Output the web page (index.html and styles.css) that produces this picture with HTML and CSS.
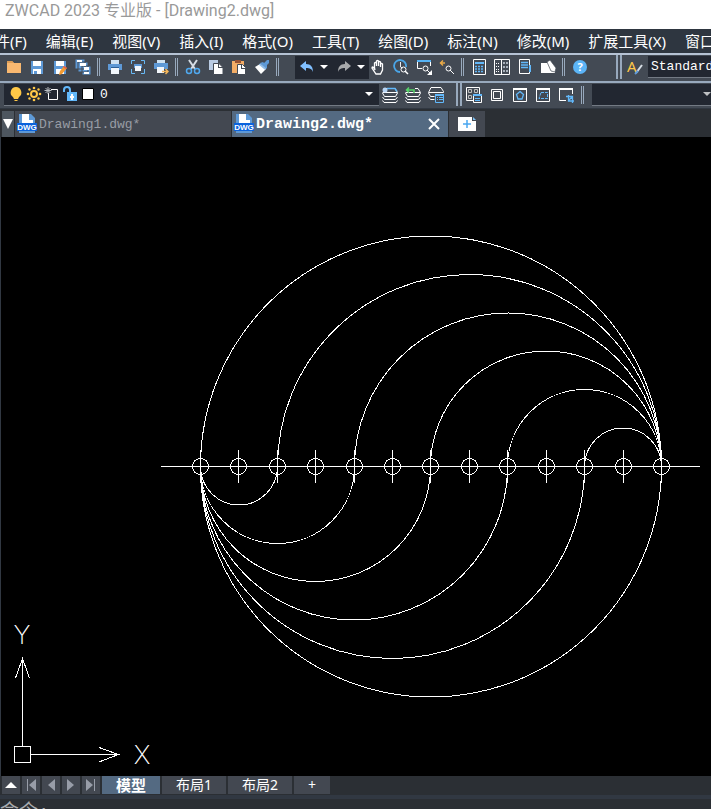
FILE: index.html
```
<!DOCTYPE html>
<html lang="zh-CN">
<head>
    <meta charset="UTF-8">
    <meta name="viewport" content="width=device-width, initial-scale=1.0">
    <title>ZWCAD 2023 专业版 - [Drawing2.dwg]</title>
    <link rel="stylesheet" href="styles.css">
</head>
<body>
    <header class="title-bar">ZWCAD 2023 专业版 - [Drawing2.dwg]</header>

    <nav class="menu-bar">
        <button>件(F)</button>
        <button>编辑(E)</button>
        <button>视图(V)</button>
        <button>插入(I)</button>
        <button>格式(O)</button>
        <button>工具(T)</button>
        <button>绘图(D)</button>
        <button>标注(N)</button>
        <button>修改(M)</button>
        <button>扩展工具(X)</button>
        <button>窗口(W)</button>
    </nav>

    <!-- standard toolbar -->
    <div class="toolbar toolbar-main">
        <button class="tool" aria-label="打开"><svg viewBox="0 0 16 16"><path fill="#f9b870" d="M1 2h5l2 2h7v10H1z"/><path fill="#dc9c56" d="M1 2h5l2 2H1z"/></svg></button>
        <button class="tool" aria-label="保存"><svg viewBox="0 0 16 16"><path fill="#5e99d6" d="M2 2h12v13H2z"/><path fill="#fff" d="M4 2h8v5H4zM4 10h8v5H4z"/><path fill="#5e99d6" d="M5 12h3v3H5z"/></svg></button>
        <button class="tool" aria-label="另存为"><svg viewBox="0 0 16 16"><path fill="#5e99d6" d="M2 2h12v13H2z"/><path fill="#fff" d="M4 2h8v5H4zM4 10h8v5H4z"/><path fill="#f49b32" d="M12 7l3 2-5 6-3 1 1-4z"/><path fill="#e45b50" d="M12 7l3 2-1 1-3-2z"/></svg></button>
        <button class="tool" aria-label="全部保存"><svg viewBox="0 0 16 16"><path fill="#5e99d6" stroke="#434a54" d="M0 0h10v10H0zM3 3h10v10H3zM7 7h9v9H7z"/><path fill="#fff" d="M2 1h5v2H2zM5 4h6v3H5zM9 8h5v3H9zM9 13h5v2H9z"/></svg></button>
        <span class="separator"></span>
        <button class="tool" aria-label="打印"><svg viewBox="0 0 16 16"><path fill="#cfe2f2" d="M4 1h8v4H4z"/><path fill="#5e99d6" d="M1 5h14v6H1z"/><path fill="#f2f7fc" d="M4 9h8v6H4z"/><path fill="#2c6097" d="M4 8h8v1H4z"/></svg></button>
        <button class="tool" aria-label="打印预览"><svg viewBox="0 0 16 16"><path fill="none" stroke="#68b9f5" d="M5 1.500H1.500V5M11 1.500h3.500V5M1.500 10v4.500H5M14.500 10v4.500H11"/><path fill="#5e99d6" d="M4 5h8v4H4z"/><path fill="#f2f7fc" d="M5 7h6v5H5z"/></svg></button>
        <button class="tool" aria-label="发布"><svg viewBox="0 0 16 16"><path fill="#cfe2f2" d="M4 1h8v3H4z"/><path fill="#5e99d6" d="M1 4h14v6H1z"/><path fill="#f2f7fc" d="M4 8h7v6H4z"/><path fill="none" stroke="#f4b65a" stroke-width="1.500" d="M9 12.500h6M12.500 10l2.500 2.500-2.500 2.500"/></svg></button>
        <span class="separator"></span>
        <button class="tool" aria-label="剪切"><svg viewBox="0 0 16 16"><path fill="none" stroke="#d6dde5" stroke-width="2" d="M4 1l6 9M12 1l-6 9"/><g fill="none" stroke="#50a9ef" stroke-width="1.500"><circle cx="4" cy="12" r="2.500"/><circle cx="12" cy="12" r="2.500"/></g></svg></button>
        <button class="tool" aria-label="复制"><svg viewBox="0 0 16 16"><path fill="#b9cbe3" d="M1 1h9v10H1z"/><path fill="#fff" stroke="#434a54" d="M5.500 4.500H11l4 4V15.500H5.500z"/><path fill="#434a54" d="M10 4h1v4h4v1h-5z"/></svg></button>
        <button class="tool" aria-label="粘贴"><svg viewBox="0 0 16 16"><path fill="#f3ad66" d="M1 2h12v12H1z"/><path fill="#975334" d="M4 1h6v3H4z"/><path fill="#fff" stroke="#434a54" d="M6.500 5.500h5l3 3v7h-8z"/><path fill="#434a54" d="M10 5h1v4h4v1h-5z"/></svg></button>
        <button class="tool" aria-label="特性匹配"><svg viewBox="0 0 16 16"><path fill="#fff" d="M1 8l5-3 6 5-5 5z"/><path fill="#5e99d6" d="M6 4l3-1 1 1 3-3h2v3l-2 2v3l-1 1z"/><path stroke="#90bde9" stroke-width="2" d="M5.500 5l6 5"/></svg></button>
        <span class="separator"></span>
        <div class="history">
            <button class="tool" aria-label="放弃"><svg viewBox="0 0 16 16"><path fill="#80bfff" d="M1 7l6-5v3c5 0 7 3 7 8-1-3-3-4-7-4v3z"/></svg></button>
            <button class="drop" aria-label="放弃列表"><svg viewBox="0 0 8 5"><path fill="#fff" d="M0 0h8L4 4z"/></svg></button>
            <button class="tool" aria-label="重做"><svg viewBox="0 0 16 16"><path fill="#a7a9ab" d="M15 7L9 2v3c-5 0-7 3-7 8 1-3 3-4 7-4v3z"/></svg></button>
            <button class="drop" aria-label="重做列表"><svg viewBox="0 0 8 5"><path fill="#fff" d="M0 0h8L4 4z"/></svg></button>
        </div>
        <button class="tool" aria-label="平移"><svg viewBox="0 0 16 16"><path fill="#434a54" stroke="#fff" stroke-width="1.300" d="M4.500 9V4q1-1 2 0V7 2q1-1 2 0V7 3q1-1 2 0V8 5q1-1 2 0V11l-2 4H6L2 9q0-2 2 0l1 2z"/></svg></button>
        <button class="tool" aria-label="实时缩放"><svg viewBox="0 0 16 16"><path fill="none" stroke="#4aa6e8" stroke-width="1.800" d="M7 13A6 6 0 1 1 13 8"/><path fill="none" stroke="#e7edf3" d="M7.500 3v5l2 1"/><circle cx="10.500" cy="10.500" r="2.500" fill="none" stroke="#fff"/><path stroke="#fff" stroke-width="1.500" d="M12 12l3 3"/></svg></button>
        <button class="tool" aria-label="窗口缩放"><svg viewBox="0 0 16 16"><path fill="none" stroke="#fff" d="M6 9.500H1.500v-7h13V7"/><path stroke="#56b3f5" stroke-width="2" d="M1 2h14"/><circle cx="9.500" cy="9.500" r="2.500" fill="none" stroke="#fff"/><path stroke="#fff" d="M11 11l3 3"/><path fill="#fff" d="M16 11v5h-5z"/></svg></button>
        <button class="tool" aria-label="缩放上一个"><svg viewBox="0 0 16 16"><path fill="none" stroke="#eaaa47" stroke-width="1.500" d="M6 4H2M4 1.500L1.500 4 4 6.500"/><circle cx="9.500" cy="9.500" r="2.500" fill="none" stroke="#fff"/><path stroke="#fff" d="M11 11l4 4"/></svg></button>
        <span class="separator"></span>
        <button class="tool" aria-label="特性"><svg viewBox="0 0 16 16"><path fill="none" stroke="#fff" d="M2.500.500h12v15h-12z"/><path stroke="#62b8fa" stroke-width="2" d="M4 4h9"/><path stroke="#62b8fa" stroke-width="1.500" stroke-dasharray="2 1" d="M4 7.500h9M4 10h9M4 12.500h9"/></svg></button>
        <button class="tool" aria-label="设计中心"><svg viewBox="0 0 16 16"><path fill="none" stroke="#fff" d="M.5.500h15v15H.5zM7.500 1v14"/><path stroke="#fff" stroke-dasharray="1 1" d="M2 4.500h4M2 7.500h4M2 10.500h4M2 12.500h4"/><path fill="none" stroke="#cbd3dc" d="M9.500 3.500h1v1h-1zM12.500 3.500h1v1h-1zM9.500 7.500h1v1h-1zM12.500 7.500h1v1h-1zM9.500 11.500h1v1h-1zM12.500 11.500h1v1h-1z"/></svg></button>
        <button class="tool" aria-label="工具选项板"><svg viewBox="0 0 16 16"><path fill="none" stroke="#fff" d="M2.500.500h10v14h-10z"/><path stroke="#62b8fa" stroke-width="1.500" d="M4 3.500h7M4 6h7M4 8.500h7"/><path fill="#62b8fa" d="M12 6h2v7h-2z"/></svg></button>
        <button class="tool" aria-label="清理"><svg viewBox="0 0 16 16"><path fill="#fff" d="M1 4h7l3 6 4 1v3H1z"/><path fill="#fff" stroke="#434a54" stroke-width=".7" d="M7 3l3-2 6 8-1 4-4-1z"/></svg></button>
        <span class="separator"></span>
        <button class="tool" aria-label="帮助"><svg viewBox="0 0 16 16"><circle cx="8" cy="8" r="7" fill="#5bb4f7"/><text class="help-mark" x="8" y="12" text-anchor="middle">?</text></svg></button>
        <span class="grip grip-styles"></span>
        <label class="tool" for="text-style" aria-label="文字样式"><svg viewBox="0 0 16 16"><text class="style-mark" x="0" y="13">A</text><path stroke="#d6dde5" stroke-width="2" d="M9 14l6-8"/><path stroke="#5e99d6" stroke-width="2" d="M8 15l3-3"/></svg></label>
        <select class="field style-field" id="text-style"><option>Standard</option></select>
    </div>

    <!-- layer toolbar -->
    <div class="toolbar toolbar-layers">
        <div class="layer-combo">
            <svg class="layer-icon" viewBox="0 0 16 16"><path fill="#ffc847" d="M8 1a5.500 5.500 0 0 1 3 10l-1 2H6l-1-2A5.500 5.500 0 0 1 8 1zM6 14h4l-1 1H7z"/></svg>
            <svg class="layer-icon" viewBox="0 0 16 16"><circle cx="8" cy="8" r="3" fill="none" stroke="#ffc847" stroke-width="2"/><g fill="#ffc847"><circle cx="8" cy="2" r="1.300"/><circle cx="8" cy="14" r="1.300"/><circle cx="2" cy="8" r="1.300"/><circle cx="14" cy="8" r="1.300"/><circle cx="3.500" cy="3.500" r="1.200"/><circle cx="12.500" cy="3.500" r="1.200"/><circle cx="3.500" cy="12.500" r="1.200"/><circle cx="12.500" cy="12.500" r="1.200"/></g></svg>
            <svg class="layer-icon" viewBox="0 0 16 16"><path fill="none" stroke="#fff" d="M7 3.500h6.500v10h-9V7"/><path stroke="#b8bcc0" d="M4 1v7M.5 4.500h7M1.500 2l5 5M6.500 2l-5 5"/></svg>
            <svg class="layer-icon" viewBox="0 0 16 16"><path fill="none" stroke="#62b8fa" stroke-width="2" d="M2 6V4q0-3 3-3t3 3v3"/><path fill="#62b8fa" d="M5 6h10v9H5z"/><path fill="#fff" d="M9 8h2v2h1v2h-1v2H9v-2H8v-2h1z"/></svg>
            <svg class="layer-icon" viewBox="0 0 16 16"><path fill="#fff" stroke="#000" d="M2.500 2.500h11v11h-11z"/></svg>
            <select class="layer-select" aria-label="图层"><option>0</option></select>
            <svg class="arrow" viewBox="0 0 8 5"><path fill="#fff" d="M0 0h8L4 4z"/></svg>
        </div>
        <button class="tool" aria-label="图层特性"><svg viewBox="0 0 16 16"><g fill="none" stroke="#fff"><path d="M3 1.500h10l2.500 4H.5M.5 6l2 3.500h11l2-3.500M.5 10l2 2.500h11l2-2.500M.5 13.500l1.500 2h12l1.500-2"/></g><path fill="none" stroke="#62b8fa" stroke-width="1.500" d="M5 1.500h8l2 3"/><circle cx="3" cy="3" r="2.500" fill="#b7d4f3"/></svg></button>
        <button class="tool" aria-label="上一个图层"><svg viewBox="0 0 16 16"><g fill="none" stroke="#fff"><path d="M10 1.500h3l2.500 4H.5M.5 6l2 3.500h11l2-3.500M.5 10l2 2.500h11l2-2.500M.5 13.500l1.500 2h12l1.500-2"/></g><path fill="none" stroke="#58d66a" stroke-width="1.500" d="M4 .5L1.500 3 4 5.500M2 3h7v3"/></svg></button>
        <button class="tool" aria-label="图层状态"><svg viewBox="0 0 16 16"><g fill="none" stroke="#fff"><path d="M3 .5h10l2.500 4v1H.5zM.5 6l2 3.500h4M.5 10l2 2.500h4"/></g><path fill="#434a54" stroke="#62b8fa" d="M7.500 7.500h8v8h-8z"/><path stroke="#62b8fa" stroke-width="2" d="M7 8h9"/><path stroke="#62b8fa" stroke-dasharray="1 1 4 9" d="M9 10.500h6M9 12.500h6"/></svg></button>
        <span class="grip grip-viewports"></span>
        <button class="tool" aria-label="视口"><svg viewBox="0 0 16 16"><path fill="none" stroke="#fff" d="M7 13.500H.5v-13h13V7"/><path fill="none" stroke="#bdbdbd" d="M2.500 2.500h3v3h-3zM8.500 2.500h3v3h-3zM2.500 8.500h3v3h-3z"/><path fill="#434a54" stroke="#fff" d="M7.500 7.500h8v8h-8z"/><path stroke="#62b8fa" stroke-width="2" d="M7 8h9"/><path stroke="#62b8fa" d="M9 11.500h5M9 13.500h5"/></svg></button>
        <button class="tool" aria-label="单个视口"><svg viewBox="0 0 16 16"><path fill="none" stroke="#fff" d="M2.500 2.500h11v11h-11zM4.500 4.500h7v7h-7z"/></svg></button>
        <button class="tool" aria-label="多边形视口"><svg viewBox="0 0 16 16"><path fill="none" stroke="#fff" d="M1.500 1.500h13v13h-13z"/><path stroke="#fff" stroke-width="2" d="M1 2h14"/><path fill="none" stroke="#62b8fa" stroke-width="1.300" d="M8 4.500l3.500 3-1.500 4.500H6L4.500 7.500z"/></svg></button>
        <button class="tool" aria-label="对象转为视口"><svg viewBox="0 0 16 16"><path fill="none" stroke="#fff" d="M1.500 1.500h13v13h-13z"/><path stroke="#fff" stroke-width="2" d="M1 2h14"/><path fill="none" stroke="#62b8fa" stroke-dasharray="3 1" d="M6 5.500h6.500v6H4z"/></svg></button>
        <button class="tool" aria-label="裁剪视口"><svg viewBox="0 0 16 16"><path fill="none" stroke="#fff" d="M8 13.500H1.500v-12h13V7"/><path stroke="#fff" stroke-width="2" d="M1 2h14"/><path fill="none" stroke="#62b8fa" stroke-width="1.300" d="M10.500 8v6H16M8 9.500h6.500V16M11 13l3-3"/></svg></button>
        <span class="separator"></span>
        <div class="field scale-field">
            <select class="layer-select" aria-label="视口比例"><option></option></select>
            <svg class="arrow" viewBox="0 0 8 5"><path fill="#bfc1c4" d="M0 0h8L4 4z"/></svg>
        </div>
    </div>

    <!-- drawing tabs -->
    <div class="file-tabs">
        <button class="tab-list" aria-label="图形列表"><svg viewBox="0 0 10 10"><path fill="#fff" d="M0 0h10L5 10z"/></svg></button>
        <button class="file-tab">
            <svg class="dwg" viewBox="0 0 20 20"><path fill="#5e99d6" d="M2 0h12l4 4v15H2z"/><path fill="#fff" d="M5 0h7v6h4v9H5z"/><path fill="#0b63dc" d="M0 9h20v8H0z"/><text class="dwg-mark" x="10" y="16" text-anchor="middle">DWG</text></svg>
            <span>Drawing1.dwg*</span>
        </button>
        <div class="file-tab active">
            <svg class="dwg" viewBox="0 0 20 20"><path fill="#5e99d6" d="M2 0h12l4 4v15H2z"/><path fill="#fff" d="M5 0h7v6h4v9H5z"/><path fill="#0b63dc" d="M0 9h20v8H0z"/><text class="dwg-mark" x="10" y="16" text-anchor="middle">DWG</text></svg>
            <span>Drawing2.dwg*</span>
            <button class="close" aria-label="关闭"><svg viewBox="0 0 12 12"><path stroke="#fff" stroke-width="2" d="M1 1l10 10M11 1L1 11"/></svg></button>
        </div>
        <button class="new-tab" aria-label="新建图形"><svg viewBox="0 0 18 14"><path fill="#fff" d="M0 0h14v4h4v10H0z"/><path fill="#7cc0f5" d="M15 0l3 3h-3z"/><path stroke="#4aa6f0" stroke-width="1.500" d="M9 3v8M5 7h8"/></svg></button>
    </div>

    <main class="canvas">
        <svg class="drawing" viewBox="1 0 710 639">
            <!-- upper arcs, all ending at the right-hand point -->
            <path d="M200.500 329.500A230.500 230.500 0 0 1 661.500 329.500"/>
            <path d="M277.500 329.500A192 192 0 0 1 661.500 329.500"/>
            <path d="M354.500 329.500A153.500 153.500 0 0 1 661.500 329.500"/>
            <path d="M430.500 329.500A115.500 115.500 0 0 1 661.500 329.500"/>
            <path d="M507.500 329.500A77 77 0 0 1 661.500 329.500"/>
            <path d="M584.500 329.500A38.500 38.500 0 0 1 661.500 329.500"/>
            <!-- lower arcs, all starting at the left-hand point -->
            <path d="M200.500 329.500A38.500 38.500 0 0 0 277.500 329.500"/>
            <path d="M200.500 329.500A77 77 0 0 0 354.500 329.500"/>
            <path d="M200.500 329.500A115 115 0 0 0 430.500 329.500"/>
            <path d="M200.500 329.500A153.500 153.500 0 0 0 507.500 329.500"/>
            <path d="M200.500 329.500A192 192 0 0 0 584.500 329.500"/>
            <path d="M200.500 329.500A230.500 230.500 0 0 0 661.500 329.500"/>
            <!-- division points -->
            <path d="M161 329.500H700M200.500 313v33M238.500 313v33M277.500 313v33M315.500 313v33M354.500 313v33M392.500 313v33M430.500 313v33M469.500 313v33M507.500 313v33M546.500 313v33M584.500 313v33M623.500 313v33M661.500 313v33"/>
            <circle cx="200.500" cy="329.500" r="8"/>
            <circle cx="238.500" cy="329.500" r="8"/>
            <circle cx="277.500" cy="329.500" r="8"/>
            <circle cx="315.500" cy="329.500" r="8"/>
            <circle cx="354.500" cy="329.500" r="8"/>
            <circle cx="392.500" cy="329.500" r="8"/>
            <circle cx="430.500" cy="329.500" r="8"/>
            <circle cx="469.500" cy="329.500" r="8"/>
            <circle cx="507.500" cy="329.500" r="8"/>
            <circle cx="546.500" cy="329.500" r="8"/>
            <circle cx="584.500" cy="329.500" r="8"/>
            <circle cx="623.500" cy="329.500" r="8"/>
            <circle cx="661.500" cy="329.500" r="8"/>
            <!-- UCS icon -->
            <path d="M14.500 609.500h16v16h-16zM22.500 609V521M15.500 541L22.500 521.500L29.500 541M31 617.500H119M99 610.500L118.500 617.500L99 625"/>
            <text class="axis" x="22" y="507" text-anchor="middle">Y</text>
            <text class="axis" x="142" y="627" text-anchor="middle">X</text>
        </svg>
    </main>

    <div class="layout-tabs">
        <button class="nav" aria-label="布局列表"><svg viewBox="0 0 12 12"><path fill="#fff" d="M0 9l6-6 6 6z"/></svg></button>
        <button class="nav" aria-label="第一个"><svg viewBox="0 0 12 12"><path fill="#989da8" d="M2 0h1v12H2zM11 0v12L4 6z"/></svg></button>
        <button class="nav" aria-label="上一个"><svg viewBox="0 0 12 12"><path fill="#989da8" d="M10 0v12L3 6z"/></svg></button>
        <button class="nav" aria-label="下一个"><svg viewBox="0 0 12 12"><path fill="#989da8" d="M2 0v12l7-6z"/></svg></button>
        <button class="nav" aria-label="最后一个"><svg viewBox="0 0 12 12"><path fill="#989da8" d="M1 0v12l7-6zM9 0h1v12H9z"/></svg></button>
        <button class="layout-tab active">模型</button>
        <button class="layout-tab">布局1</button>
        <button class="layout-tab">布局2</button>
        <button class="layout-tab">+</button>
    </div>

    <footer class="command-line">命令:</footer>
</body>
</html>
```
FILE: styles.css
```
* {
    box-sizing: border-box;
}

body {
    margin: 0;
    height: 100vh;
    overflow: hidden;
    display: flex;
    flex-direction: column;
    background-color: #313842;
    color: #fff;
    font-family: "Noto Sans", "Noto Sans CJK SC", sans-serif;
    font-size: 15px;
}

button,
select {
    margin: 0;
    padding: 0;
    border: none;
    border-radius: 0;
    background: none;
    color: inherit;
    font: inherit;
}

select {
    appearance: none;
}

svg {
    display: block;
    flex: none;
}

.title-bar {
    flex: none;
    height: 29px;
    padding-left: 5px;
    background-color: #fff;
    color: #999;
    font-family: Roboto, "Noto Sans CJK SC", sans-serif;
    font-size: 16px;
    line-height: 22px;
    white-space: nowrap;
}

.menu-bar {
    flex: none;
    display: flex;
    gap: 19px;
    height: 24px;
    margin-left: -5px;
    background-color: #2e3640;
    line-height: 24px;
    overflow: hidden;
}

.menu-bar button {
    flex: none;
    white-space: nowrap;
}

/* toolbars */
.toolbar {
    flex: none;
    display: flex;
    align-items: center;
    background-color: #434a54;
    overflow: hidden;
}

.toolbar-main {
    height: 30px;
    padding: 0 0 2px 2px;
    border-top: 2px solid #b5c2d4;
    border-bottom: 2px solid #98a9bd;
}

.toolbar-layers {
    height: 25px;
    padding: 0 0 2px 4px;
}

.tool {
    flex: none;
    display: flex;
    justify-content: center;
    align-items: center;
    width: 23px;
    height: 22px;
}

.tool svg,
.layer-icon {
    width: 16px;
    height: 16px;
}

.separator {
    flex: none;
    width: 9px;
    height: 18px;
    padding: 0 3px;
}

.separator::before {
    content: "";
    display: block;
    height: 18px;
    border-left: 1px solid #98a9bd;
    border-right: 1px solid #98a9bd;
}

.grip {
    flex: none;
    align-self: stretch;
    width: 6px;
    border-left: 2px solid #98a9bd;
    border-right: 2px solid #98a9bd;
}

.grip-styles {
    margin: 0 1px 0 25px;
}

.grip-viewports {
    margin: 0 1px 0 8px;
}

.history {
    flex: none;
    display: flex;
    align-items: center;
    width: 74px;
    height: 23px;
    margin: 0 -3px 0 13px;
    background-color: #222731;
}

.drop {
    width: 14px;
    padding-left: 2px;
}

.drop svg,
.arrow {
    width: 8px;
    height: 5px;
}

.help-mark {
    fill: #fff;
    font-size: 11px;
    font-weight: bold;
}

.style-mark {
    fill: #ffc847;
    font-size: 15px;
}

.field {
    flex: 1;
    min-width: 0;
    height: 22px;
    background-color: #222731;
    border-bottom: 1px solid #737a84;
}

.style-field {
    margin-left: 2px;
    padding-left: 3px;
    font-family: "Liberation Mono", monospace;
    font-size: 13px;
}

.layer-combo {
    flex: none;
    display: flex;
    align-items: center;
    gap: 2px;
    width: 53%;
    height: 22px;
    padding: 0 6px 0 4px;
    background-color: #222731;
    border-bottom: 1px solid #737a84;
}

.layer-select {
    flex: 1;
    min-width: 0;
    padding-left: 2px;
    font-family: "Liberation Mono", monospace;
    font-size: 13px;
}

.scale-field {
    display: flex;
    align-items: center;
    margin-left: 5px;
}

/* drawing tabs */
.file-tabs {
    flex: none;
    display: flex;
    gap: 1px;
    height: 29px;
    padding: 2px 0 0 2px;
    background-color: #2b2f34;
    border-top: 1px solid #313842;
}

.tab-list {
    display: flex;
    justify-content: center;
    align-items: center;
    width: 12px;
    background-color: #4d565f;
}

.tab-list svg {
    width: 10px;
    height: 10px;
}

.file-tab {
    flex: none;
    display: flex;
    align-items: center;
    gap: 2px;
    width: 216px;
    padding: 0 8px 0 2px;
    background-color: #434851;
    color: #989da5;
    font-family: "Liberation Mono", monospace;
    font-size: 13px;
}

.file-tab.active {
    background-color: #546a82;
    color: #fff;
    font-size: 15px;
    font-weight: bold;
}

.dwg {
    width: 20px;
    height: 20px;
}

.dwg-mark {
    fill: #fff;
    font-family: "Liberation Sans", sans-serif;
    font-size: 8px;
    font-weight: bold;
}

.close {
    margin-left: auto;
}

.close svg {
    width: 12px;
    height: 12px;
}

.new-tab {
    display: flex;
    justify-content: center;
    align-items: center;
    width: 36px;
    background-color: #434851;
}

.new-tab svg {
    width: 18px;
    height: 14px;
}

/* model space */
.canvas {
    flex: 1;
    min-height: 0;
    background-color: #000;
    border-left: 1px solid #313842;
    overflow: hidden;
}

.drawing {
    width: 100%;
    height: 100%;
    fill: none;
    stroke: #fff;
    shape-rendering: crispEdges;
}

.axis {
    fill: #fff;
    stroke: none;
    font-family: Inter, sans-serif;
    font-size: 26px;
    font-weight: 200;
}

/* layout tabs */
.layout-tabs {
    flex: none;
    display: flex;
    gap: 2px;
    height: 19px;
    padding: 0 0 1px 2px;
    background-color: #2b2f34;
}

.nav {
    display: flex;
    justify-content: center;
    align-items: center;
    width: 18px;
    background-color: #434851;
}

.nav svg {
    width: 12px;
    height: 12px;
}

.layout-tab {
    padding: 0 14px;
    background-color: #434851;
    font-size: 14px;
    line-height: 18px;
}

.layout-tab.active {
    background-color: #546a82;
    font-size: 15px;
    font-weight: bold;
}

.command-line {
    flex: none;
    height: 10px;
    margin-top: 4px;
    background-color: #2b2f34;
    color: #a9abae;
    font-family: "Liberation Mono", "Noto Sans CJK SC", monospace;
    font-size: 19px;
    line-height: 28px;
    overflow: hidden;
}
```
